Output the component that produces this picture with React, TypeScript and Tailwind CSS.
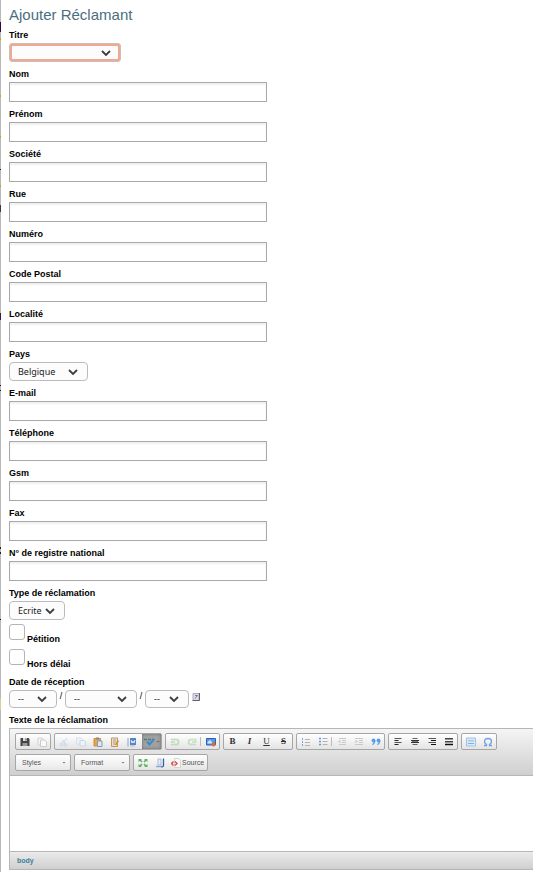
import type { ReactNode } from 'react'

const identityFields = [
  { id: "nom", label: "Nom" },
  { id: "prenom", label: "Prénom" },
  { id: "societe", label: "Société" },
  { id: "rue", label: "Rue" },
  { id: "numero", label: "Numéro" },
  { id: "code-postal", label: "Code Postal" },
  { id: "localite", label: "Localité" },
]

const contactFields = [
  { id: "email", label: "E-mail" },
  { id: "telephone", label: "Téléphone" },
  { id: "gsm", label: "Gsm" },
  { id: "fax", label: "Fax" },
  { id: "registre", label: "N° de registre national" },
]

// Edge of the dimmed page that shows behind the dialog
const edgeMarks = [
  { top: 22, height: 10, color: "#32083a" },
  { top: 38, height: 2, color: "#c8a800" },
  { top: 95, height: 2, color: "#c8a800" },
  { top: 136, height: 2, color: "#c8a800" },
  { top: 169, height: 1, color: "#222222" },
  { top: 185, height: 2, color: "#c8a800" },
  { top: 205, height: 7, color: "#4a3050" },
  { top: 313, height: 7, color: "#32204a" },
  { top: 385, height: 1, color: "#101030" },
  { top: 390, height: 1, color: "#101030" },
  { top: 547, height: 2, color: "#222222" },
  { top: 552, height: 2, color: "#222222" },
  { top: 619, height: 1, color: "#111111" },
  { top: 699, height: 11, color: "#d8cf9c" },
]

const plainFrame = "h-[19px] rounded-[4px] border border-[#bbbbbb]"
const shortFrame = "h-[18px] rounded-[4px] border border-[#bbbbbb]"
const errorFrame = "h-[19px] rounded-[4px] border-[3px] border-[#f0a890] outline-1 -outline-offset-1 outline-solid outline-[#c9c0bc]"

function Label({ htmlFor, children }: { htmlFor: string; children: ReactNode }) {
  return (
    <label htmlFor={htmlFor} className="block h-4 text-[9px] leading-4 font-bold text-black">
      {children}
    </label>
  )
}

function TextField({ id, label }: { id: string; label: string }) {
  return (
    <div>
      <Label htmlFor={id}>{label}</Label>
      <input
        id={id}
        type="text"
        className="block h-5 w-[258px] max-w-full border border-[#a9a9a9] bg-white px-1 text-[9px] shadow-[inset_0_2px_2px_#f0f0f0] outline-none"
      />
    </div>
  )
}

type DropDownProps = {
  id: string
  value: string
  width: string
  label?: string
  frame?: string
}

function DropDown({ id, value, width, label, frame = plainFrame }: DropDownProps) {
  return (
    <div className={`relative ${width}`}>
      <select
        id={id}
        aria-label={label}
        className={`block w-full appearance-none bg-[#fcfcfc] pl-2 font-['Noto_Sans',sans-serif] text-[9px] leading-4 text-[#222222] outline-none ${frame}`}
      >
        <option>{value}</option>
      </select>
      <svg className="pointer-events-none absolute top-1/2 right-2.5 size-2.5 -translate-y-1/2" viewBox="0 0 10 10" fill="none" stroke="#3c3c3c" strokeWidth="1.8">
        <path d="M1 3l4 4 4-4" />
      </svg>
    </div>
  )
}

function CheckField({ id, label }: { id: string; label: string }) {
  return (
    <div className="flex h-[21px] items-start gap-0.5">
      <input id={id} type="checkbox" className="size-4 appearance-none rounded-[3px] border border-[#b5b5b5] bg-white" />
      <label htmlFor={id} className="self-end text-[9px] leading-3 font-bold text-black">{label}</label>
    </div>
  )
}

function Icon({ children }: { children: ReactNode }) {
  return (
    <svg className="size-2.5" viewBox="0 0 10 10" fill="none">
      {children}
    </svg>
  )
}

function Tool({ title, children }: { title: string; children: ReactNode }) {
  return (
    <button type="button" title={title} aria-label={title} className="flex w-[17px] items-center justify-center">
      {children}
    </button>
  )
}

function Group({ children }: { children: ReactNode }) {
  return (
    <div className="flex h-[17px] shrink-0 rounded-[2px] border border-[#a6a6a6] bg-linear-to-b from-white to-[#e4e4e4]">
      {children}
    </div>
  )
}

function Separator() {
  return <div className="my-[3px] mr-px w-px bg-[#bdbdbd]" />
}

function Combo({ label }: { label: string }) {
  return (
    <button type="button" className="flex h-[17px] w-14 shrink-0 items-center justify-between rounded-[2px] border border-[#a6a6a6] bg-linear-to-b from-white to-[#e8e8e8] pr-1 pl-1.5 text-[7px] leading-none text-[#555555]">
      {label}
      <svg className="size-1" viewBox="0 0 4 4" fill="#777777"><path d="M.5 1h3L2 2.500z" /></svg>
    </button>
  )
}

function Toolbar() {
  return (
    <div className="flex flex-col gap-1 border-b border-[#b6b6b6] bg-linear-to-b from-[#f5f5f5] to-[#cfcfcf] px-[5px] py-1">
      <div className="flex gap-[3px]">
        <Group>
          <Tool title="Enregistrer">
            <Icon>
              <path d="M.5 1h8l1 1v7h-9z" fill="#444" />
              <path d="M3 1h4v3H3z" fill="#ddd" />
              <path d="M5.500 1.500h1v2h-1z" fill="#444" />
              <path d="M2.500 6h5v3h-5z" fill="#999" />
            </Icon>
          </Tool>
          <Tool title="Nouvelle page">
            <Icon>
              <path d="M1 1h4l2 2v5H1z" fill="#f5f5f5" stroke="#d0d0d0" />
              <path d="M3.500 3h4l2 2v4.500h-6z" fill="#fafafa" stroke="#cccccc" />
            </Icon>
          </Tool>
        </Group>
        <Group>
          <Tool title="Couper">
            <Icon>
              <path d="M8 1L3.500 6.500M4 3l2 4" stroke="#ccd9e6" />
              <circle cx="2.500" cy="7.500" r="1.400" stroke="#c3d6ea" />
              <circle cx="6.500" cy="8" r="1.300" stroke="#c3d6ea" />
            </Icon>
          </Tool>
          <Tool title="Copier">
            <Icon>
              <path d="M.5 1h4.500l1.500 1.500V7h-6z" fill="#edf3f9" stroke="#d3e0ec" />
              <path d="M4 3.500h4l1.500 1.500v4H4z" fill="#edf3f9" stroke="#c6d7e8" />
            </Icon>
          </Tool>
          <Tool title="Coller">
            <Icon>
              <path d="M1 1.500h6.500V9H1z" fill="#e9a54c" stroke="#c98c40" />
              <path d="M3 .5h3v2H3z" fill="#888" />
              <path d="M4.500 4h4.500v5.500H4.500z" fill="#dce8f6" stroke="#7f9cc0" />
            </Icon>
          </Tool>
          <Tool title="Coller comme texte">
            <Icon>
              <path d="M1.500 1h6v8.500h-6z" fill="#f0dfc0" stroke="#c4985c" />
              <path d="M3 3h3M3 5h3M3 7h2" stroke="#8ea4be" />
              <path d="M8.500 3.500L5.500 8" stroke="#e28b21" strokeWidth="1.500" />
            </Icon>
          </Tool>
          <Tool title="Coller de Word">
            <Icon>
              <path d="M1 1v8.500" stroke="#8ba1c6" />
              <path d="M3 1h6v7H3z" fill="#5884cc" />
              <path d="M4 3l1 3 1-2 1 2 1-3" stroke="#fff" strokeWidth=".8" />
              <path d="M3 9h5" stroke="#a7b7d0" />
            </Icon>
          </Tool>
          <button type="button" title="Orthographe" aria-label="Orthographe" className="ml-0.5 flex w-[19px] items-center justify-center bg-[#a0a0a0] shadow-[inset_0_0_3px_#666666]">
            <svg className="h-2.5 w-3" viewBox="0 0 12 10" fill="none">
              <path d="M0 2.500h3M4 2.500h3M8 2.500h2" stroke="#4a7c6c" strokeWidth="1.500" />
              <path d="M3 4.500l2.500 3L10 2" stroke="#378bd0" strokeWidth="2" />
            </svg>
            <svg className="size-1" viewBox="0 0 4 4" fill="#666666"><path d="M.5 1h3L2 2.500z" /></svg>
          </button>
        </Group>
        <Group>
          <Tool title="Annuler">
            <Icon><path d="M1 2.500h5.500q2 0 2 2.500t-2 2.500H1M5 5H1" stroke="#bedcba" strokeWidth="1.700" /></Icon>
          </Tool>
          <Tool title="Rétablir">
            <Icon><path d="M7 2.500H4q-2.500 0-2.500 2.500T4 7.500h5M5 5h3.500V1.500" stroke="#c4dfc0" strokeWidth="1.700" /></Icon>
          </Tool>
          <Separator />
          <Tool title="Image">
            <Icon>
              <path d="M.5 1.500h9v6.500h-9z" fill="#5b96e6" stroke="#2c5fb5" />
              <path d="M1.500 5l2.500-2 2 2v1.500H1.500z" fill="#cde2ff" />
              <circle cx="7.500" cy="7.500" r="2" fill="#df6b2e" />
            </Icon>
          </Tool>
        </Group>
        <Group>
          <Tool title="Gras">
            <span className="font-['Liberation_Serif',serif] text-[9px] leading-none font-bold text-[#333333]">B</span>
          </Tool>
          <Tool title="Italique">
            <span className="font-['Liberation_Serif',serif] text-[9px] leading-none font-bold text-[#333333] italic">I</span>
          </Tool>
          <Tool title="Souligné">
            <span className="font-['Liberation_Serif',serif] text-[9px] leading-none text-[#333333] underline">U</span>
          </Tool>
          <Tool title="Barré">
            <span className="font-['Liberation_Serif',serif] text-[9px] leading-none font-bold text-[#333333] line-through">S</span>
          </Tool>
        </Group>
        <Group>
          <Tool title="Liste numérotée">
            <Icon>
              <path d="M1.500 1v2M1.500 4v2M1.500 7v2" stroke="#78a9df" />
              <path d="M4 2.500h5M4 5.500h5M4 8.500h5" stroke="#b4b4b4" />
            </Icon>
          </Tool>
          <Tool title="Liste à puces">
            <Icon>
              <path d="M1 1.500h2M1 4.500h2M1 7.500h2" stroke="#5d9be2" strokeWidth="1.600" />
              <path d="M4.500 1.500h5M4.500 4.500h5M4.500 7.500h5" stroke="#b4b4b4" />
            </Icon>
          </Tool>
          <Separator />
          <Tool title="Diminuer le retrait">
            <Icon>
              <path d="M2 1.500h7M5 3.500h4M5 5.500h4M2 7.500h7" stroke="#c9c9c9" />
              <path d="M3.500 3L1 4.500 3.500 6z" fill="#b5cbe4" />
            </Icon>
          </Tool>
          <Tool title="Augmenter le retrait">
            <Icon>
              <path d="M1 1.500h8M5 3.500h4M5 5.500h4M1 7.500h8" stroke="#c9c9c9" />
              <path d="M1.500 3L4 4.500 1.500 6z" fill="#b5cbe4" />
            </Icon>
          </Tool>
          <Tool title="Citation">
            <Icon>
              <circle cx="2.500" cy="3.500" r="1.900" fill="#5a9eea" />
              <circle cx="7.500" cy="3.500" r="1.900" fill="#5a9eea" />
              <path d="M3.800 3.500q0 3-2.500 4M8.800 3.500q0 3-2.500 4" stroke="#5a9eea" strokeWidth="1.300" />
            </Icon>
          </Tool>
        </Group>
        <Group>
          <Tool title="Aligner à gauche">
            <Icon>
              <path d="M1.500 1.500h7M1.500 5.500h7" stroke="#555" />
              <path d="M1.500 3.500h4M1.500 7.500h4" stroke="#222" />
            </Icon>
          </Tool>
          <Tool title="Centrer">
            <Icon>
              <path d="M2.500 1.500h5M2.500 7.500h5" stroke="#666" />
              <path d="M1 3.500h8M1 5.500h8" stroke="#333" />
              <path d="M2 4.500h6" stroke="#777" />
            </Icon>
          </Tool>
          <Tool title="Aligner à droite">
            <Icon>
              <path d="M1.500 1.500h7.500M1.500 5.500h7.500" stroke="#555" />
              <path d="M4 3.500h5M4 7.500h5" stroke="#111" />
            </Icon>
          </Tool>
          <Tool title="Justifier">
            <Icon>
              <path d="M1 1.500h8M1 4.500h8" stroke="#444" />
              <path d="M1 2.500h8M1 5.500h8" stroke="#999" />
              <path d="M1 7.500h8" stroke="#111" strokeWidth="1.500" />
            </Icon>
          </Tool>
        </Group>
        <Group>
          <Tool title="Modèles">
            <Icon>
              <path d="M.5 1h9v8h-9z" fill="#d8e9fb" stroke="#9cc3ef" />
              <path d="M2 3h6v1.500H2z" fill="#b9cfa6" />
              <path d="M2 6.500h6" stroke="#84aede" />
            </Icon>
          </Tool>
          <Tool title="Caractère spécial">
            <Icon><path d="M1 8.500h2.500V7.500Q1.500 6.300 1.500 4.500 1.500 1.500 5 1.500t3.500 3q0 1.800-2 3v1H9" stroke="#6f9fe2" strokeWidth="1.300" /></Icon>
          </Tool>
        </Group>
      </div>
      <div className="flex gap-[3px]">
        <Combo label="Styles" />
        <Combo label="Format" />
        <Group>
          <Tool title="Agrandir">
            <Icon>
              <path d="M.5 1h3.500L.5 4zM9.500 1v3L6 1zM.5 9V6L4 9zM9.500 9H6l3.500-3z" fill="#5fb25f" />
              <path d="M2 2l2 2M8 2L6 4M2 8l2-2M8 8L6 6" stroke="#5fb25f" strokeWidth="1.600" />
            </Icon>
          </Tool>
          <Tool title="Afficher les blocs">
            <Icon>
              <path d="M1 8.500h6" stroke="#8fa9cc" strokeWidth="1.500" />
              <path d="M3 1h3v6H3z" fill="#e8eef7" stroke="#a9bbd4" />
              <path d="M8.500.5v7q0 1.500-2 1.500" stroke="#315fa8" strokeWidth="1.300" />
            </Icon>
          </Tool>
          <button type="button" className="flex items-center gap-px px-[3px] text-[7px] leading-none text-[#555555]">
            <Icon>
              <path d="M3.500.5h4l2 2v7h-6z" fill="#fafafa" stroke="#d3d3d3" />
              <path d="M2.500 3.500l-2 2 2 2M4 3.500l2 2-2 2" stroke="#e24848" strokeWidth="1.400" />
            </Icon>
            Source
          </button>
        </Group>
      </div>
    </div>
  )
}

export default function App() {
  return (
    <div className="relative min-h-screen overflow-hidden bg-white pl-[9px] font-['Liberation_Sans',Arial,sans-serif] text-black">
      <div className="absolute inset-y-0 left-0 w-px bg-[#b9b9b9]">
        {edgeMarks.map((mark, index) => (
          <div key={index} className="absolute w-px" style={{ top: mark.top, height: mark.height, backgroundColor: mark.color }} />
        ))}
      </div>
      <h1 className="pt-1 pb-px text-[15px] leading-[22px] text-[#4a6e80]">Ajouter Réclamant</h1>
      <form className="flex flex-col gap-1">
        <div>
          <Label htmlFor="titre">Titre</Label>
          <DropDown id="titre" value="" width="w-28" frame={errorFrame} />
        </div>
        {identityFields.map((field) => (
          <TextField key={field.id} id={field.id} label={field.label} />
        ))}
        <div>
          <Label htmlFor="pays">Pays</Label>
          <DropDown id="pays" value="Belgique" width="w-[79px]" />
        </div>
        {contactFields.map((field) => (
          <TextField key={field.id} id={field.id} label={field.label} />
        ))}
        <div>
          <Label htmlFor="type">Type de réclamation</Label>
          <DropDown id="type" value="Ecrite" width="w-14" />
        </div>
        <CheckField id="petition" label="Pétition" />
        <CheckField id="hors-delai" label="Hors délai" />
        <div>
          <Label htmlFor="jour">Date de réception</Label>
          <div className="flex text-[9px] leading-3">
            <DropDown id="jour" value="--" width="w-12" frame={shortFrame} />
            <span className="w-2 text-center">/</span>
            <DropDown id="mois" label="Mois" value="--" width="w-[72px]" frame={shortFrame} />
            <span className="w-2 text-center">/</span>
            <DropDown id="annee" label="Année" value="--" width="w-11" frame={shortFrame} />
            <button type="button" title="Calendrier" aria-label="Calendrier" className="flex items-start py-[3px] pl-[3px]">
              <svg className="size-2" viewBox="0 0 8 8" fill="none">
                <path d="M1 .5h6v7H1z" fill="#d5deed" stroke="#a3aec0" />
                <path d="M7.500 0v7.500H.5" stroke="#5b6475" />
                <path d="M3 2.500h2.500L3 5.500" stroke="#c0605c" />
              </svg>
            </button>
          </div>
        </div>
        <div>
          <Label htmlFor="texte">Texte de la réclamation</Label>
          <div className="border-y border-l border-[#b6b6b6]">
            <Toolbar />
            <textarea id="texte" className="block h-[75px] w-full resize-none bg-white p-2 text-[9px] outline-none" />
            <div className="flex h-[18px] items-center border-t border-[#b6b6b6] bg-linear-to-b from-[#ebebeb] to-[#cfcfcf] pl-[7px]">
              <button type="button" className="text-[7px] leading-none font-bold text-[#3d7f96]">body</button>
            </div>
          </div>
        </div>
      </form>
    </div>
  )
}
